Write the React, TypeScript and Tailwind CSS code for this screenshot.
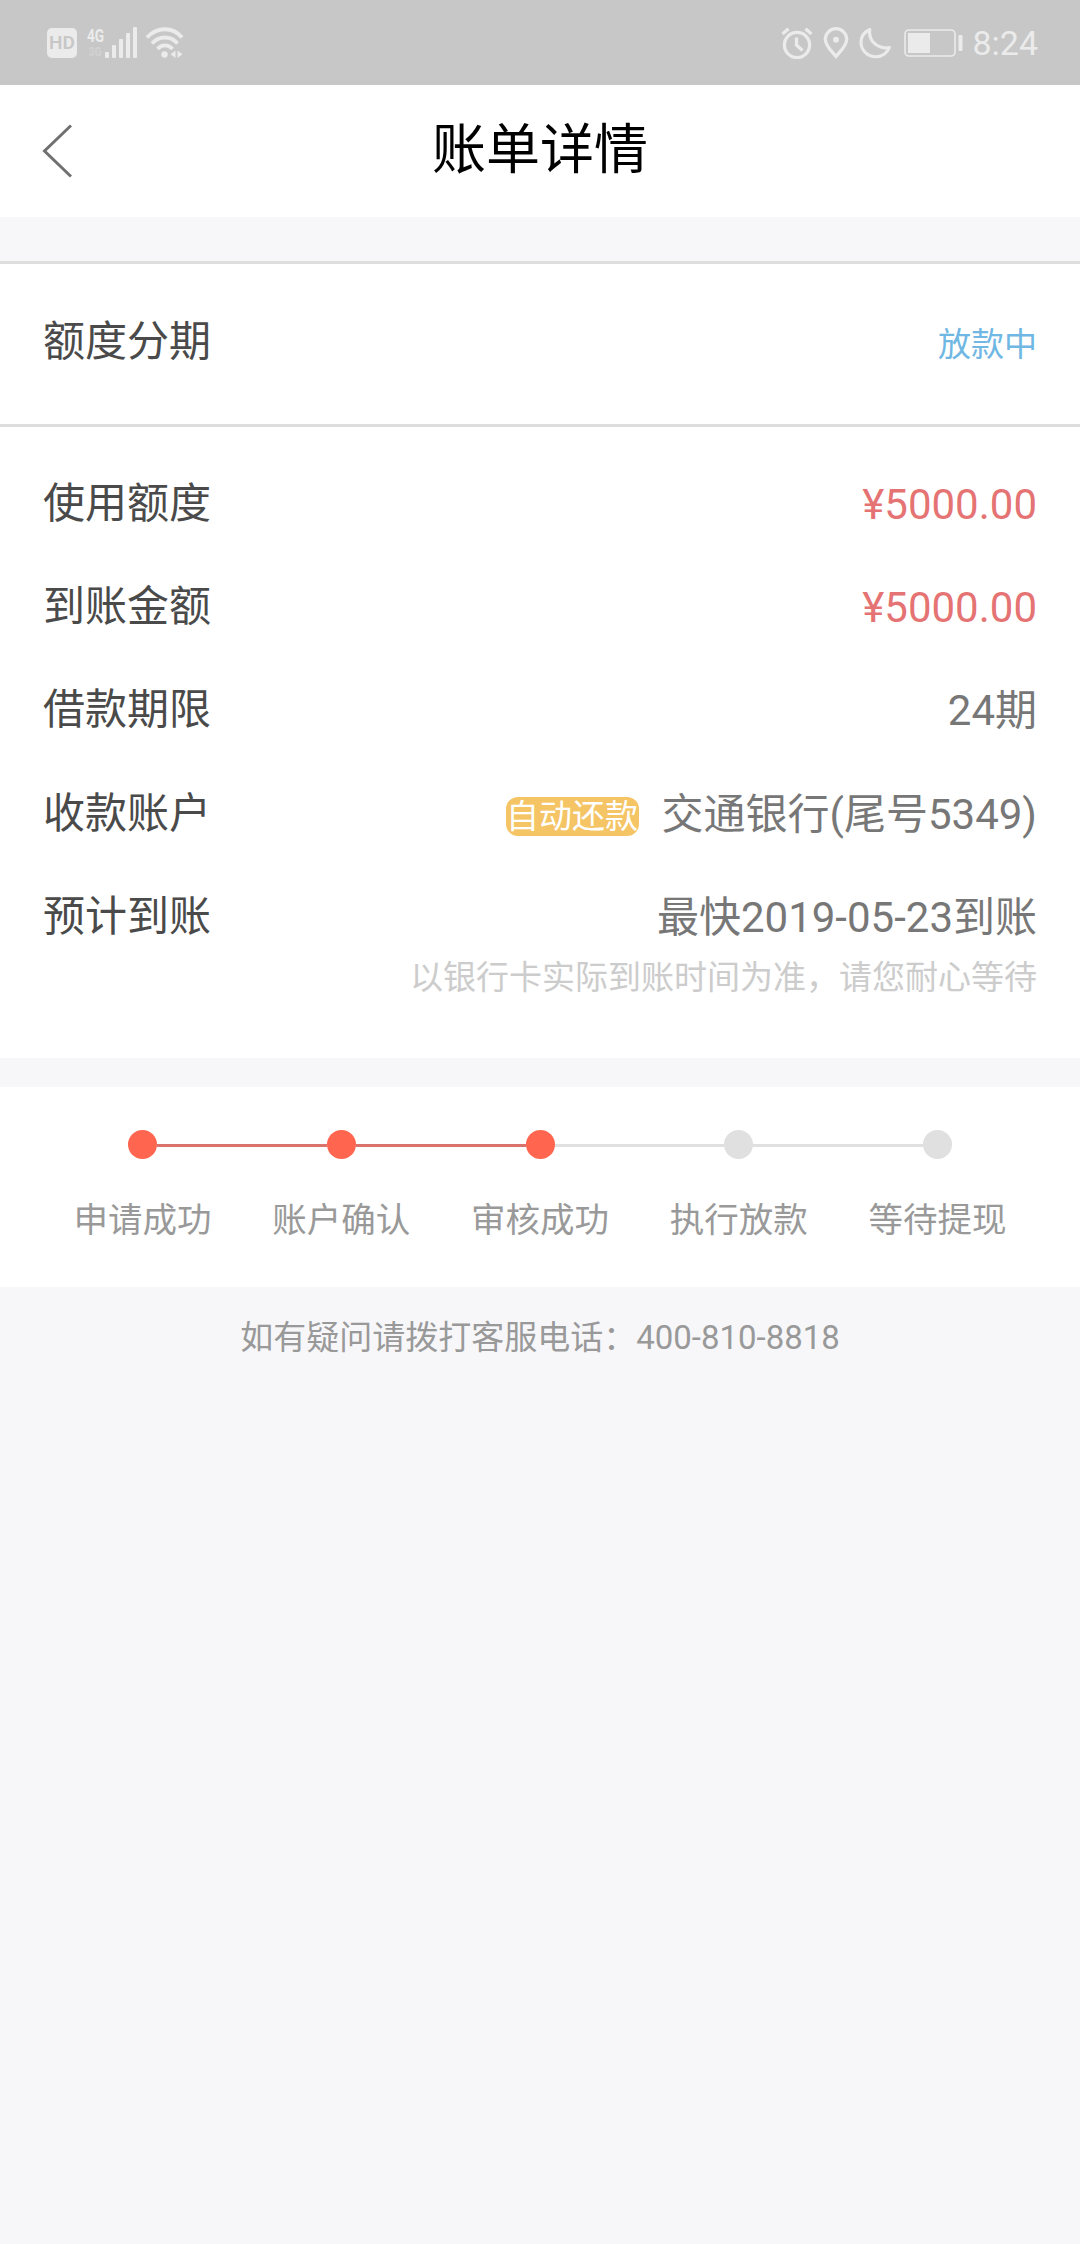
import type { ReactNode } from 'react'
import clsx from 'clsx'

interface DetailRow {
  label: string
  value: string
  /** Small pill shown before the value */
  tag?: string
  highlight?: boolean
}

const rows: DetailRow[] = [
  { label: '使用额度', value: '¥5000.00', highlight: true },
  { label: '到账金额', value: '¥5000.00', highlight: true },
  { label: '借款期限', value: '24期' },
  { label: '收款账户', value: '交通银行(尾号5349)', tag: '自动还款' },
  { label: '预计到账', value: '最快2019-05-23到账' },
]

const steps = ['申请成功', '账户确认', '审核成功', '执行放款', '等待提现']
const currentStep = 2

function StatusBar() {
  return (
    <div className="flex h-[85px] items-center justify-between bg-[#c7c7c7] pr-[42px] pl-[47px] text-[#ebebeb]">
      <div className="flex items-center">
        {/* HD voice */}
        <div className="flex h-[30px] w-[30px] items-center justify-center rounded-[5px] bg-[#ebebeb] text-[19px] leading-none font-semibold text-[#c7c7c7]">
          HD
        </div>
        {/* Mobile signal, with the idle second network under it */}
        <div className="ml-[10px] flex h-8 w-[17px] flex-col font-bold">
          <span className="origin-left scale-x-[0.72] text-[19px] leading-[17px]">4G</span>
          <span className="origin-left scale-x-[0.8] pl-0.5 text-[13px] leading-[15px] opacity-30">3G</span>
        </div>
        <svg className="h-8 w-[34px]" viewBox="0 0 34 32" fill="currentColor">
          <rect x="1" y="25" width="4" height="6" rx="1" />
          <rect x="8" y="18" width="4" height="13" rx="1" />
          <rect x="15" y="12" width="4" height="19" rx="1" />
          <rect x="22" y="6" width="4" height="25" rx="1" />
          <rect x="29" y="0" width="4" height="31" rx="1" />
        </svg>
        <svg className="ml-[7px] h-8 w-[40px]" viewBox="0 0 40 32" fill="none" stroke="currentColor" strokeWidth="3.8">
          <path d="M2 10.5C12 -0.5 28 -0.5 37 10.5" />
          <path d="M7 16.5C14 8.5 26 8.5 32.5 16.5" />
          <path d="M12.5 22C16.5 17.2 23.5 17.2 27.5 22" />
          <circle cx="19.5" cy="27.5" r="3.2" fill="currentColor" stroke="none" />
          <path d="M30.5 23.5V31L25.5 27.3ZM32.5 23.5V31L37.5 27.3Z" fill="currentColor" stroke="none" />
        </svg>
      </div>

      <div className="flex items-center">
        <svg className="h-8 w-8" viewBox="0 0 32 32" fill="none" stroke="currentColor" strokeWidth="3.3">
          <circle cx="16" cy="18" r="12.6" />
          <path d="M15.5 10.5V18L21.5 23.5M1.5 7L7.5 1.8M24.5 1.8L30.5 7" />
        </svg>
        <svg className="ml-[10px] h-8 w-[26px]" viewBox="0 0 26 32" fill="none" stroke="currentColor" strokeWidth="3.3">
          <path d="M13 29.5C8.5 24 2.3 18.5 2.3 12.4A10.7 10.7 0 0 1 23.7 12.4C23.7 18.5 17.5 24 13 29.5Z" />
          <circle cx="13" cy="12.8" r="3" fill="currentColor" stroke="none" />
        </svg>
        <svg className="ml-[10px] h-8 w-8" viewBox="0 0 32 32" fill="none" stroke="currentColor" strokeWidth="3.1" strokeLinejoin="round">
          <path d="M10.8 2.5C4.5 5.5 1.8 11 2 16C2.5 24 9 29.8 17 29.8C23.5 29.5 28.5 25.5 30.3 20.5C25 22 18 19.8 13.8 14.8C10.8 11 10 7 10.8 2.5Z" />
        </svg>
        <svg className="ml-[13px] h-8 w-[60px]" viewBox="0 0 60 32" fill="currentColor">
          <rect x="1" y="3" width="50" height="26" rx="4" fill="none" stroke="currentColor" strokeWidth="1.6" />
          <rect x="4" y="6" width="22" height="20" />
          <rect x="54.5" y="8" width="4" height="16" rx="1" />
        </svg>
        <span className="ml-[8px] text-[34px] leading-none">8:24</span>
      </div>
    </div>
  )
}

function Header() {
  return (
    <header className="grid h-[132px] grid-cols-[1fr_auto_1fr] items-center bg-white px-[42px] pb-px">
      <button aria-label="返回">
        <svg className="mt-px h-[54px] w-[30px]" viewBox="0 0 30 54" fill="none" stroke="#707070" strokeWidth="3">
          <path d="M29 1.5L2.5 27L29 52.5" />
        </svg>
      </button>
      <h1 className="text-[54px] leading-none text-black">账单详情</h1>
    </header>
  )
}

function Section({ className, children }: { className?: string; children: ReactNode }) {
  return <section className={clsx('bg-white px-[43px]', className)}>{children}</section>
}

function StepItem({ label, index }: { label: string; index: number }) {
  const done = index <= currentStep
  const lineLeft = index === 0 ? 'bg-transparent' : done ? 'bg-[#d9736b]' : 'bg-[#e0e0e0]'
  const lineRight =
    index === steps.length - 1 ? 'bg-transparent' : index < currentStep ? 'bg-[#d9736b]' : 'bg-[#e0e0e0]'

  return (
    <li className="flex flex-1 flex-col items-center">
      <div className="flex w-full items-center">
        <span className={clsx('mt-px h-[3px] flex-1', lineLeft)} />
        <span className={clsx('size-[29px] rounded-full', done ? 'bg-[#ff654f]' : 'bg-[#e0e0e0]')} />
        <span className={clsx('mt-px h-[3px] flex-1', lineRight)} />
      </div>
      <span className="mt-[43px] text-[34.5px] leading-[36px] text-[#999]">{label}</span>
    </li>
  )
}

export default function App() {
  return (
    <div
      lang="zh-CN"
      className="min-h-[2244px] w-[1080px] bg-[#f7f7f9] font-['Roboto','Noto_Sans_CJK_SC',sans-serif] whitespace-nowrap"
    >
      <StatusBar />
      <Header />

      {/* Bill type and state */}
      <Section className="mt-11 flex h-[166px] items-center justify-between border-y-[3px] border-[#dedede]">
        <span className="-mt-1 text-[42px] leading-[48px] text-[#4a4a4a]">额度分期</span>
        <span className="mt-0.5 text-[33px] leading-[40px] text-[#70b8e3]">放款中</span>
      </Section>

      {/* Loan details */}
      <Section className="h-[631px] pt-[26px]">
        {rows.map((row) => (
          <div key={row.label} className="flex h-[103.4px] items-center justify-between text-[42px] leading-[48px]">
            <span className="-mt-0.5 text-[#4a4a4a]">{row.label}</span>
            <div className="flex items-center">
              {row.tag && (
                <span className="mt-[4px] mr-[23px] flex h-[39px] w-[133px] items-center justify-center rounded-xl bg-[#f5c465] text-[33px] leading-[39px] text-white">
                  {row.tag}
                </span>
              )}
              <span className={row.highlight ? 'text-[#e57373]' : 'text-[#777]'}>{row.value}</span>
            </div>
          </div>
        ))}
        <p className="-mt-3 text-right text-[33px] leading-[40px] text-[#ccc]">
          以银行卡实际到账时间为准，请您耐心等待
        </p>
      </Section>

      {/* Progress */}
      <Section className="mt-[29px] h-[200px] pt-[43px]">
        <ol className="flex">
          {steps.map((label, index) => (
            <StepItem key={label} label={label} index={index} />
          ))}
        </ol>
      </Section>

      <p className="pt-[31px] text-center text-[33px] leading-[40px] text-[#999]">
        如有疑问请拨打客服电话：400-810-8818
      </p>
    </div>
  )
}
